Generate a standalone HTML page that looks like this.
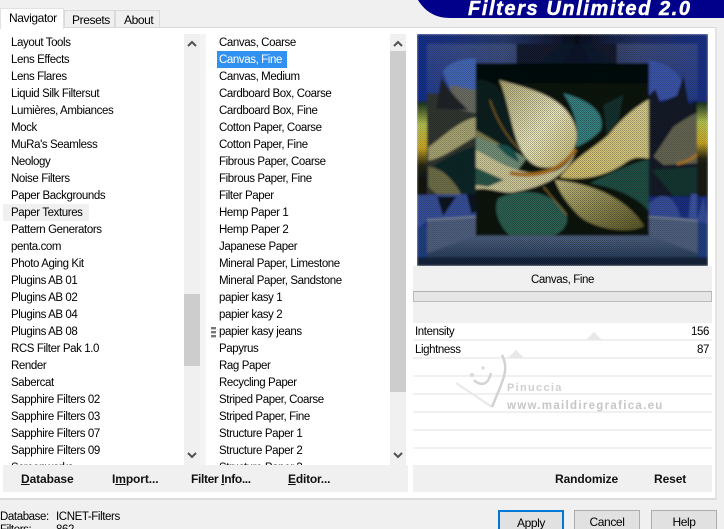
<!DOCTYPE html>
<html><head><meta charset="utf-8">
<style>
html,body{margin:0;padding:0;width:724px;height:529px;overflow:hidden}
#p{width:724px;height:529px;overflow:hidden;background:#f0f0f0;position:relative;font-family:"Liberation Sans",sans-serif;font-size:11.5px;letter-spacing:-.4px;color:#000}
.a{position:absolute}
.row{position:absolute;white-space:nowrap;line-height:17px;height:17px}
.list{position:absolute;top:35px;height:430px;overflow:hidden}
.b{font-weight:bold;font-size:12px;letter-spacing:-.1px;position:absolute;top:472px;white-space:nowrap;line-height:15px;color:#111}
.btn{position:absolute;top:510px;width:64px;height:25px;background:#e1e1e1;border:1px solid #adadad;text-align:center;line-height:23px;font-size:12px}
.line{position:absolute;left:413px;width:299px;height:2px;background:#f0f0f0}
u{text-decoration:underline}
</style></head><body><div id="p">
<div class="a" style="left:0;top:27px;width:717px;height:473px;background:#fff;border-top:1px solid #d9d9d9;border-bottom:2px solid #dcdcdc;border-right:2px solid #e4e4e4;box-sizing:border-box"></div>
<div class="a" style="left:0;top:8px;width:64px;height:21px;background:#fff;border:1px solid #e2e2e2;border-bottom:0;box-sizing:border-box;line-height:18px;padding-left:8px;font-size:12px">Navigator</div>
<div class="a" style="left:64px;top:10px;width:51px;height:18px;border:1px solid #dadada;border-bottom:0;box-sizing:border-box;line-height:19px;padding-left:7px;font-size:12px">Presets</div>
<div class="a" style="left:115px;top:10px;width:45px;height:18px;border:1px solid #dadada;border-bottom:0;box-sizing:border-box;line-height:19px;padding-left:8px;font-size:12px">About</div>
<svg class="a" style="left:410px;top:0" width="314" height="20"><path d="M8,0 C14,10 24,18 40,18 L314,18 L314,0Z" fill="#00008a"/></svg>
<div class="a" style="left:468px;top:-1px;font:italic bold 20px/20px 'Liberation Sans',sans-serif;color:#fff;letter-spacing:1.6px;white-space:nowrap;-webkit-text-stroke:.5px #fff">Filters Unlimited 2.0</div>

<!-- Left list -->
<div class="a" style="left:3px;top:204px;width:86px;height:17px;background:#f0f0f0"></div>
<div class="list" style="left:11px;width:172px">
<div class="row" style="top:0">Layout Tools</div><div class="row" style="top:17px">Lens Effects</div><div class="row" style="top:34px">Lens Flares</div><div class="row" style="top:51px">Liquid Silk Filtersut</div><div class="row" style="top:68px">Lumières, Ambiances</div><div class="row" style="top:85px">Mock</div><div class="row" style="top:102px">MuRa's Seamless</div><div class="row" style="top:119px">Neology</div><div class="row" style="top:136px">Noise Filters</div><div class="row" style="top:153px">Paper Backgrounds</div><div class="row" style="top:170px">Paper Textures</div><div class="row" style="top:187px">Pattern Generators</div><div class="row" style="top:204px">penta.com</div><div class="row" style="top:221px">Photo Aging Kit</div><div class="row" style="top:238px">Plugins AB 01</div><div class="row" style="top:255px">Plugins AB 02</div><div class="row" style="top:272px">Plugins AB 04</div><div class="row" style="top:289px">Plugins AB 08</div><div class="row" style="top:306px">RCS Filter Pak 1.0</div><div class="row" style="top:323px">Render</div><div class="row" style="top:340px">Sabercat</div><div class="row" style="top:357px">Sapphire Filters 02</div><div class="row" style="top:374px">Sapphire Filters 03</div><div class="row" style="top:391px">Sapphire Filters 07</div><div class="row" style="top:408px">Sapphire Filters 09</div><div class="row" style="top:425px">Screenworks</div>
</div>
<div class="a" style="left:184px;top:34px;width:16px;height:431px;background:#f0f0f0"></div>
<div class="a" style="left:184px;top:294px;width:16px;height:72px;background:#cdcdcd"></div>
<div class="a" style="left:200px;top:34px;width:6px;height:431px;background:#f4f4f4"></div>
<svg class="a" style="left:184px;top:34px" width="16" height="431"><path d="M4,12 L8,8 L12,12" fill="none" stroke="#505050" stroke-width="2"/><path d="M4,419 L8,423 L12,419" fill="none" stroke="#505050" stroke-width="2"/></svg>

<!-- Middle list -->
<div class="a" style="left:217px;top:51px;width:70px;height:17px;background:#3191f1"></div>
<div class="list" style="left:219px;width:170px">
<div class="row" style="top:0">Canvas, Coarse</div><div class="row" style="top:17px;color:#fff">Canvas, Fine</div><div class="row" style="top:34px">Canvas, Medium</div><div class="row" style="top:51px">Cardboard Box, Coarse</div><div class="row" style="top:68px">Cardboard Box, Fine</div><div class="row" style="top:85px">Cotton Paper, Coarse</div><div class="row" style="top:102px">Cotton Paper, Fine</div><div class="row" style="top:119px">Fibrous Paper, Coarse</div><div class="row" style="top:136px">Fibrous Paper, Fine</div><div class="row" style="top:153px">Filter Paper</div><div class="row" style="top:170px">Hemp Paper 1</div><div class="row" style="top:187px">Hemp Paper 2</div><div class="row" style="top:204px">Japanese Paper</div><div class="row" style="top:221px">Mineral Paper, Limestone</div><div class="row" style="top:238px">Mineral Paper, Sandstone</div><div class="row" style="top:255px">papier kasy 1</div><div class="row" style="top:272px">papier kasy 2</div><div class="row" style="top:289px">papier kasy jeans</div><div class="row" style="top:306px">Papyrus</div><div class="row" style="top:323px">Rag Paper</div><div class="row" style="top:340px">Recycling Paper</div><div class="row" style="top:357px">Striped Paper, Coarse</div><div class="row" style="top:374px">Striped Paper, Fine</div><div class="row" style="top:391px">Structure Paper 1</div><div class="row" style="top:408px">Structure Paper 2</div><div class="row" style="top:425px">Structure Paper 3</div>
</div>
<svg class="a" style="left:211px;top:327px" width="6" height="12"><rect width="5" height="2.4" fill="#777"/><rect y="4" width="5" height="2.4" fill="#777"/><rect y="8" width="5" height="2.4" fill="#777"/></svg>
<div class="a" style="left:390px;top:34px;width:16px;height:431px;background:#f0f0f0"></div>
<div class="a" style="left:390px;top:51px;width:16px;height:341px;background:#cdcdcd"></div>
<svg class="a" style="left:390px;top:34px" width="16" height="431"><path d="M4,12 L8,8 L12,12" fill="none" stroke="#505050" stroke-width="2"/><path d="M4,419 L8,423 L12,419" fill="none" stroke="#505050" stroke-width="2"/></svg>

<!-- Preview -->
<svg class="a" style="left:417px;top:34px" width="291" height="232" viewBox="22 12 871 696" preserveAspectRatio="none">
<defs>
<linearGradient id="top" x1="0" x2="1" y1="0" y2="0"><stop offset="0" stop-color="#17339a"/><stop offset=".3" stop-color="#2b3f78"/><stop offset=".55" stop-color="#0a1022"/><stop offset=".75" stop-color="#26366e"/><stop offset="1" stop-color="#1a3496"/></linearGradient>
<linearGradient id="fr" x1="0" x2="0" y1="0" y2="1"><stop offset="0" stop-color="#6f7fa8"/><stop offset="1" stop-color="#3c5aa8"/></linearGradient>
<linearGradient id="floor" x1="0" x2="0" y1="0" y2="1"><stop offset="0" stop-color="#55698a"/><stop offset="1" stop-color="#2c4464"/></linearGradient>
<linearGradient id="petal" x1="0" x2="1" y1="0" y2="1"><stop offset="0" stop-color="#b8b078"/><stop offset=".55" stop-color="#f2efc4"/><stop offset="1" stop-color="#cfc078"/></linearGradient>
<linearGradient id="petal2" x1="1" x2="0" y1="0" y2="1"><stop offset="0" stop-color="#e0d698"/><stop offset="1" stop-color="#dcc870"/></linearGradient>
<linearGradient id="petal3" x1="0" x2="1" y1="0" y2="1"><stop offset="0" stop-color="#ccc484"/><stop offset="1" stop-color="#5e5a28"/></linearGradient>
<linearGradient id="lg" x1="0" x2="0" y1="0" y2="1"><stop offset="0" stop-color="#14301e"/><stop offset=".3" stop-color="#c6d658"/><stop offset=".62" stop-color="#e0b828"/><stop offset=".85" stop-color="#2a2814"/><stop offset="1" stop-color="#141c1c"/></linearGradient>
<pattern id="tx" width="6" height="6" patternUnits="userSpaceOnUse"><rect x="0" y="0" width="3" height="3" fill="#000" opacity=".36"/><rect x="3" y="3" width="3" height="3" fill="#000" opacity=".28"/></pattern>
<filter id="bl" x="0" y="0" width="1" height="1"><feGaussianBlur stdDeviation="3.5"/></filter>
<clipPath id="cc"><rect x="198" y="100" width="518" height="517"/></clipPath>
</defs>
<g filter="url(#bl)">
<rect x="22" y="12" width="871" height="696" fill="url(#top)"/>
<rect x="22" y="210" width="871" height="340" fill="#1a338c"/>
<path d="M52,42 L862,42 L862,210 L716,210 L716,100 L198,100 L198,210 L52,210Z" fill="url(#fr)" opacity=".38"/>
<path d="M320,42 H620 V100 H320Z" fill="#0c1428" opacity=".85"/>
<path d="M100,125 C120,90 170,85 198,85 L198,180 L120,175Z" fill="#4a70c4"/>
<path d="M716,90 C770,100 812,120 830,200 L716,215Z" fill="#3f5cb8"/>
<rect x="22" y="215" width="36" height="225" fill="url(#lg)"/>
<rect x="22" y="440" width="36" height="60" fill="#16160f"/>
<rect x="52" y="190" width="146" height="310" fill="#343a34"/>
<path d="M120,165 L198,180 L198,250 L130,235Z" fill="#73766a"/>
<path d="M95,140 C110,175 150,215 175,240 L80,235Z" fill="#20262c"/>
<path d="M56,352 C100,320 150,270 198,262 L198,320 C150,345 100,385 56,392Z" fill="#b4b07c"/>
<path d="M56,410 C100,420 150,450 165,495 L80,492 L56,470Z" fill="#78784f"/>
<path d="M70,407 C110,385 160,355 198,350 L198,490 L172,545 C160,490 130,440 70,407Z" fill="#0f2a2c"/>
<path d="M22,495 L198,492 L198,565 L52,572 L22,600Z" fill="#3a56a6"/>
<path d="M82,500 L140,500 L100,558Z" fill="#0e1624"/>
<path d="M170,492 L198,492 L198,545 L185,552Z" fill="#0e1624"/>
<rect x="858" y="215" width="35" height="200" fill="url(#lg)"/>
<rect x="858" y="400" width="35" height="100" fill="#1a1c14"/>
<path d="M716,197 L735,177 L750,217 L800,197 L820,137 L835,222 L860,212 L860,500 L716,500Z" fill="#121a2c"/>
<path d="M790,290 C820,270 850,250 860,250 L860,400 L760,405 L730,380Z" fill="#6e6e5a"/>
<path d="M800,402 C830,395 850,385 860,372" fill="none" stroke="#c08428" stroke-width="9"/>
<path d="M725,420 L860,410 L860,495 L790,500Z" fill="#173a36"/>
<path d="M745,500 C780,490 800,520 810,562 L860,570 L880,500 L893,580 L860,575 L716,555 L716,520Z" fill="#3a55a8"/>
<path d="M842,492 L860,492 L860,568 L835,565Z" fill="#3f5cb0"/>
<rect x="22" y="590" width="36" height="90" fill="#23448c"/>
<rect x="860" y="580" width="33" height="100" fill="#23448c"/>
<path d="M52,572 L198,562 L198,617 L52,670Z" fill="#56688a"/>
<path d="M52,570 L198,560" stroke="#8595ac" stroke-width="5"/>
<path d="M716,562 L862,574 L862,670 L716,617Z" fill="#56688a"/>
<path d="M716,560 L862,572" stroke="#8595ac" stroke-width="5"/>
<path d="M52,670 L198,617 L716,617 L862,670 L862,682 L52,682Z" fill="url(#floor)"/>
<rect x="22" y="682" width="871" height="26" fill="#15253f"/>
<rect x="198" y="100" width="518" height="517" fill="#0a130f"/>
<g clip-path="url(#cc)">
<rect x="198" y="100" width="518" height="60" fill="#060a08"/>
<path d="M198,240 C240,290 280,320 320,370 L198,340Z" fill="#8a8a58"/>
<path d="M198,150 C250,140 300,200 320,300 L370,390 L300,360 L198,300Z" fill="#0a2420"/>
<path d="M198,320 C250,340 290,350 350,385 L320,425 L198,385Z" fill="#7a9a80"/>
<path d="M258,345 C290,340 315,350 328,398 L290,375Z" fill="#1f5a56"/>
<path d="M460,190 C520,205 590,240 572,300 C545,330 520,340 498,352 C505,300 500,250 460,190Z" fill="#3a8888"/>
<path d="M580,225 L640,195 L625,270 L590,315Z" fill="#123432"/>
<path d="M198,360 C250,385 300,425 380,430 C440,435 475,405 497,365 C470,445 390,472 310,487 C270,490 235,470 198,478Z" fill="#d8d2a0"/>
<path d="M198,412 L282,450 L235,470 L198,465Z" fill="#2c5c50"/>
<path d="M716,208 C670,235 630,270 595,315 C545,360 490,385 450,442 C530,455 600,432 650,395 C680,375 700,385 716,385Z" fill="url(#petal2)"/>
<path d="M268,150 C335,170 440,190 482,260 C512,310 502,350 472,385 C440,420 385,420 360,395 C305,345 305,235 268,150Z" fill="url(#petal)"/>
<path d="M265,505 C340,470 420,485 462,540 C485,575 460,605 430,617 L300,617 C265,585 250,540 265,505Z" fill="#2e6656"/>
<path d="M540,460 C600,430 660,400 716,388 L716,545 C680,495 600,470 540,460Z" fill="#225549"/>
<path d="M435,450 C520,458 640,490 702,588 C660,612 560,600 510,560 C470,520 450,490 435,450Z" fill="url(#petal3)"/>
<path d="M300,428 C370,445 450,428 497,358" fill="none" stroke="#b87c20" stroke-width="12"/>
<path d="M240,210 C260,270 290,320 330,360" fill="none" stroke="#8a6a20" stroke-width="4"/>
<path d="M400,470 L470,555" fill="none" stroke="#a08030" stroke-width="3"/>
</g>
</g>
<rect x="22" y="12" width="871" height="696" fill="url(#tx)"/>
</svg>

<!-- Right panel -->
<div class="a" style="left:413px;top:266px;width:299px;height:57px;background:#f0f0f0"></div>
<div class="a" style="left:413px;top:272px;width:299px;text-align:center;line-height:15px;font-size:11.5px;margin-top:0.5px">Canvas, Fine</div>
<div class="a" style="left:413px;top:291px;width:299px;height:11px;box-sizing:border-box;background:#e6e6e6;border:1px solid #bcbcbc;border-top-color:#b0b0b0"></div>
<div class="line" style="top:339px"></div><div class="line" style="top:357px"></div><div class="line" style="top:375px"></div><div class="line" style="top:393px"></div><div class="line" style="top:411px"></div><div class="line" style="top:429px"></div><div class="line" style="top:447px"></div>
<svg class="a" style="left:440px;top:320px" width="240" height="110">
<path d="M146,20 L154,12 L162,20Z" fill="#e8e8e8"/><path d="M68,38 L76,30 L84,38Z" fill="#e8e8e8"/>
<path d="M16,63 L52,87" stroke="#e8e8e8" stroke-width="2" fill="none"/>
<path d="M52,87 C62,62 70,50 62,35" stroke="#d2d2d2" stroke-width="2.5" fill="none"/>
<path d="M34,60 C40,66 48,66 51,53" stroke="#d4d4d4" stroke-width="2.5" fill="none"/>
<circle cx="32" cy="55" r="2" fill="#d8d8d8"/><circle cx="43" cy="48" r="1.6" fill="#d8d8d8"/>
<text x="67" y="71" font-family="Liberation Sans,sans-serif" font-weight="bold" font-size="11" letter-spacing="1.3" fill="#cfcfcf">Pinuccia</text>
<text x="67" y="89" font-family="Liberation Sans,sans-serif" font-weight="bold" font-size="11.5" letter-spacing="1.3" fill="#c6c6c6">www.maildiregrafica.eu</text>
</svg>
<div class="row" style="left:415px;top:323px;margin-top:.5px">Intensity</div>
<div class="row" style="right:15px;top:323px;margin-top:.5px">156</div>
<div class="row" style="left:415px;top:341px;margin-top:.5px">Lightness</div>
<div class="row" style="right:15px;top:341px;margin-top:.5px">87</div>

<!-- Button bars -->
<div class="a" style="left:3px;top:465px;width:405px;height:27px;background:#f0f0f0"></div>
<div class="a" style="left:413px;top:465px;width:299px;height:27px;background:#f0f0f0"></div>
<div class="b" style="left:21px"><u>D</u>atabase</div>
<div class="b" style="left:112px">I<u>m</u>port...</div>
<div class="b" style="left:191px;letter-spacing:-.35px">Filter <u>I</u>nfo...</div>
<div class="b" style="left:288px;letter-spacing:-.2px"><u>E</u>ditor...</div>
<div class="b" style="left:555px">Randomize</div>
<div class="b" style="left:654px">Reset</div>

<!-- Status -->
<div class="row" style="left:0;top:509px">Database:</div>
<div class="row" style="left:56px;top:509px">ICNET-Filters</div>
<div class="row" style="left:0;top:522px">Filters:</div>
<div class="row" style="left:56px;top:522px">862</div>
<div class="btn" style="left:498px;width:62px;border:2px solid #0078d7;line-height:22px">Apply</div>
<div class="btn" style="left:574px">Cancel</div>
<div class="btn" style="left:651px">Help</div>
</div></body></html>
